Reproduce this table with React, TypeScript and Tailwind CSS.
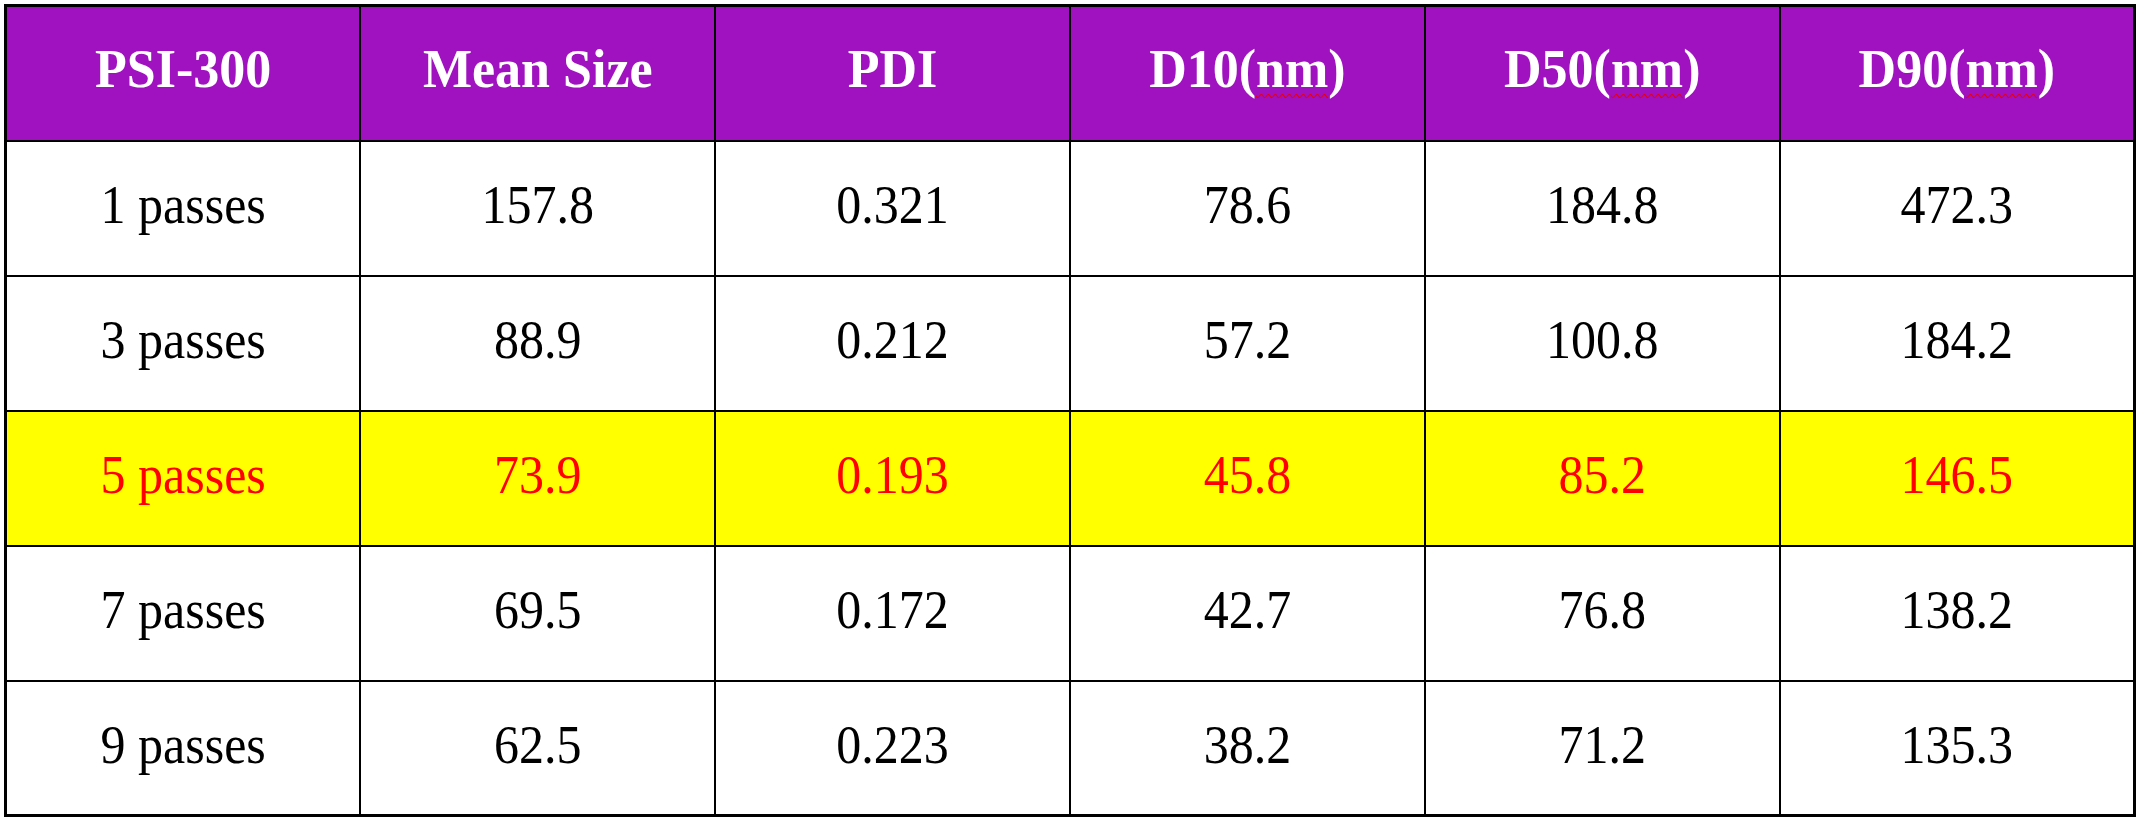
const headers = ["PSI-300", "Mean Size", "PDI", "D10", "D50", "D90"];

const rows = [
  ["1 passes", "157.8", "0.321", "78.6", "184.8", "472.3"],
  ["3 passes", "88.9", "0.212", "57.2", "100.8", "184.2"],
  ["5 passes", "73.9", "0.193", "45.8", "85.2", "146.5"],
  ["7 passes", "69.5", "0.172", "42.7", "76.8", "138.2"],
  ["9 passes", "62.5", "0.223", "38.2", "71.2", "135.3"],
];

// the 5-pass row is the one highlighted in the sheet
const highlight = 2;

export default function App() {
  return (
    <div className="min-h-screen bg-white p-1 font-['Liberation_Serif','Times_New_Roman',serif]">
      <table className="w-[2132px] table-fixed border-collapse border-[3px] border-black">
        <thead>
          <tr className="h-[135px] bg-[#a012c0] text-white">
            {headers.map((h, i) => (
              <th key={i} className="border-2 border-black pb-[8px] text-center align-middle text-[52px] font-bold leading-none">
                <span className="inline-block scale-y-[1.06]">
                  {i < 3 ? (
                    h
                  ) : (
                    <>
                      {h}(<span className="underline decoration-wavy decoration-red-600 decoration-1 underline-offset-[6px]">nm</span>)
                    </>
                  )}
                </span>
              </th>
            ))}
          </tr>
        </thead>
        <tbody>
          {rows.map((row, r) => (
            <tr key={r} className={r === highlight ? "h-[135px] bg-[#ffff00] text-[#ff0000]" : "h-[135px] bg-white text-black"}>
              {row.map((cell, c) => (
                <td key={c} className="border-2 border-black pb-[8px] text-center align-middle text-[50px] leading-none">
                  <span className="inline-block scale-y-[1.1]">{cell}</span>
                </td>
              ))}
            </tr>
          ))}
        </tbody>
      </table>
    </div>
  );
}
